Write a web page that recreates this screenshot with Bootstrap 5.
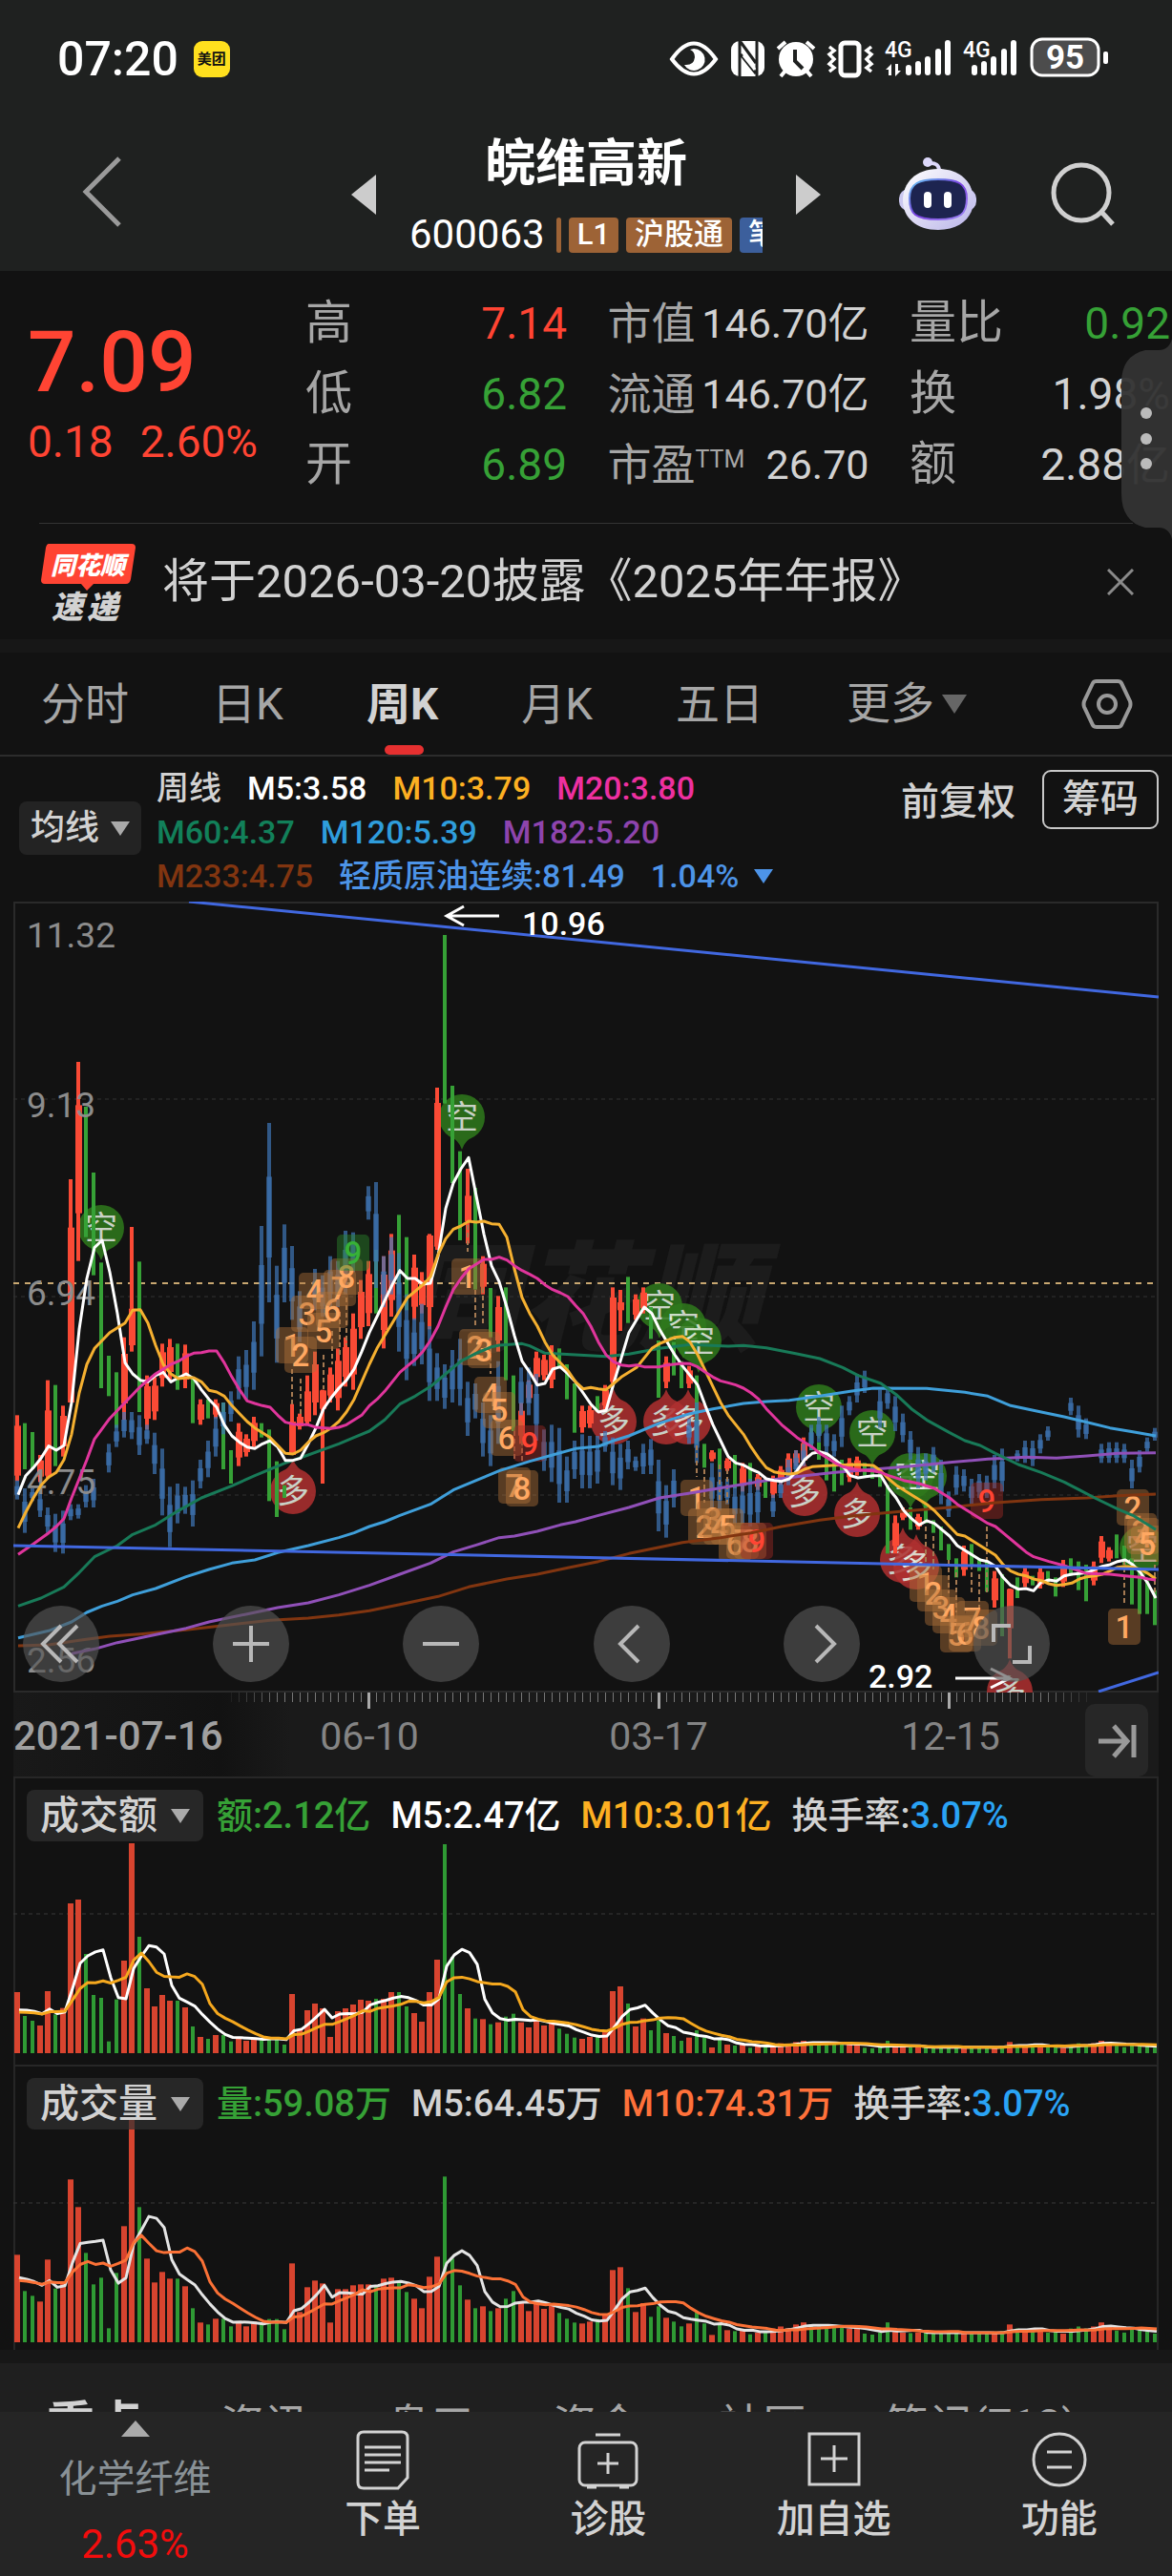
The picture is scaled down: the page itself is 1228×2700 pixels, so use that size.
<!DOCTYPE html>
<html lang="zh-CN">
<head>
<meta charset="utf-8">
<meta name="viewport" content="width=device-width, initial-scale=1">
<title>皖维高新 600063</title>
<link href="https://cdn.jsdelivr.net/npm/bootstrap@5.3.0/dist/css/bootstrap.min.css" rel="stylesheet">
<style>
:root{--up:#ff4433;--down:#36a136;--ink:#d2d2d2;--dim:#a6a6a6}
html,body{height:100%}
body{background:#121212;color:var(--ink);font-family:Roboto,"Noto Sans CJK SC",sans-serif;overflow:hidden}
button{background:none;border:0;padding:0;color:inherit}
svg{display:block}
.txt-up{color:var(--up)}.txt-down{color:var(--down)}
.c-white{color:#fff}.c-gold{color:#fdb022}.c-pink{color:#ee30a0}.c-green{color:#12805a}.c-sky{color:#2f9ddc}.c-violet{color:#8e44ad}.c-brown{color:#813510}.c-blue{color:#4d94e8}.c-orange{color:#ff713a}.c-rate{color:#2aa3f5}
.top-area{background:#1f2120}
.status-bar{height:124px;padding:0 66px 0 60px}
.clock{font-size:50px;font-weight:500;line-height:60px;color:#fff}
.app-chip{width:38px;height:38px;border-radius:9px;background:#ffe01e;color:#111;font-size:15px;font-weight:700;line-height:38px;text-align:center}
.title-bar{height:160px;padding:0 60px}
.side{flex:1 1 0}
.back{margin-left:24px}
.tools{gap:56px}
.title-mid{gap:35px}
.stock-name{font-size:53px;font-weight:700;line-height:60px;color:#fff}
.code-line{width:370px;height:40px;overflow:hidden;white-space:nowrap}
.code-num{font-size:42px;line-height:40px;color:#fff}
.tag{height:37px;line-height:36px;font-size:31px;font-weight:500;color:#fff;background:#9d6336;border-radius:4px;padding:0 9px;flex:none}
.tag-blue{background:#3c5f9c}
.tag-sliver{width:5px;padding:0}
.quote{padding:18px 2px 24px 29px}
.price-col{width:291px}
.price{font-size:89px;line-height:100px;font-weight:500;margin-top:28px}
.chg{font-size:46px;line-height:66px;gap:28px}
.stat{height:74px;font-size:49px;line-height:74px}
.stat dt{font-weight:400;color:var(--dim)}
.stat dd{margin:0;font-size:46px;color:var(--ink)}
.stat dd.txt-up{color:var(--up)}.stat dd.txt-down{color:var(--down)}
.stat sup{font-size:25px;top:-13px}
.col-a{width:274px}.col-b{width:274px}.col-c{width:273px}
.col-b .stat{font-size:46px}.col-b dd{font-size:43px}
.side-handle{position:absolute;right:0;top:340px;z-index:5}
.rule{height:1px;background:#333;margin:0 41px}
.news{height:121px;padding:0 40px 0 43px}
.news-text{font-size:49px;line-height:60px}
.band{height:14px;background:#171717}
.k-tabs{height:109px;padding:0 41px 0 43px;gap:87px;border-bottom:2px solid #2c2c2c}
.k-tabs button{height:107px;font-size:46px;line-height:109px;color:var(--dim)}
.k-tabs .on{font-weight:700;color:var(--ink);position:relative}
.k-tabs .on::after{content:"";position:absolute;left:19px;bottom:0;width:41px;height:10px;border-radius:5px;background:#e63030}
.legend-bar{height:152px;padding:10px 14px 4px 20px}
.pill{background:#232323;border-radius:8px;height:56px;padding:0 14px;font-size:36px;font-weight:500;line-height:56px}
.ma-pill{width:128px;padding:0 12px}
.ma-rows{font-size:34px;font-weight:500;line-height:46px}
.ma-row{gap:27px}
.adj{font-size:40px;font-weight:500;line-height:60px}
.chips{border:2px solid #c8c8c8;border-radius:9px;height:62px;width:122px;font-size:40px;font-weight:500;line-height:58px}
.chart-wrap{margin:0 14px;position:relative}
.chart-wrap>svg{width:100%;height:auto}
.pads{position:absolute;left:0;right:0;bottom:11px;padding:0 114px 0 10px}
.pads button{width:80px;height:80px;border-radius:50%;background:rgba(84,84,84,.65)}
.axis{background:#1a1a1a}
.axis button{position:absolute;right:11px;top:12px;width:66px;height:76px;background:#272727;border-radius:10px}
.vol{border-top:2px solid #272727}
.vol-head{position:absolute;left:14px;top:12px;font-size:38px;font-weight:500;line-height:54px;gap:21px}
.vol-head .pill{width:185px;height:54px;font-size:41px;line-height:54px;background:rgba(48,48,48,.7);margin-right:-7px}
.strip{background:#1f1f1f;flex:1 1 0;min-height:0;overflow:hidden;padding:33px 0 0 49px;gap:82px;font-size:46px;line-height:62px;color:var(--dim);white-space:nowrap}
.strip .on{font-weight:700;font-size:50px;color:var(--ink)}
.dock{background:#252525;height:172px}
.dock button{flex:1 1 0;font-size:40px;font-weight:500;line-height:50px;height:172px}
.dock svg{margin:0 auto 6px}
.dock .sector{flex:0 0 283px;font-weight:400;color:#899196}
.dock .sector svg{margin-bottom:20px}
.sector-up{color:#f20d0d;font-size:42px;margin-top:18px}
text{font-family:Roboto,"Noto Sans CJK SC",sans-serif}
</style>
<script src="https://cdn.jsdelivr.net/npm/bootstrap@5.3.0/dist/js/bootstrap.bundle.min.js"></script>
</head>
<body class="d-flex flex-column position-relative">
<header class="top-area">
  <div class="status-bar d-flex align-items-center justify-content-between">
    <div class="d-flex align-items-center gap-3"><span class="clock">07:20</span><span class="app-chip">美团</span></div>
    <svg width="462" height="46" viewBox="700 39 462 46" fill="none" stroke="#fff" role="img" aria-label="状态">
      <path d="M704 62Q727 29 750 62Q727 93 704 62Z" stroke-width="4"/><path d="M727 51a11.500 11.500 0 1 1-10 17q10 1 11-8q0-6-5-8z" fill="#fff" stroke="none"/>
      <rect x="766" y="43" width="35" height="37" rx="9" fill="#fff" stroke="none"/><path d="M775 43v37M776 44l16 22M776 57l16 20M793 43v37" stroke="#1f2120" stroke-width="3"/><path d="M779 58l12 15" stroke-width="3"/>
      <circle cx="834" cy="62" r="18" fill="#fff" stroke="none"/><path d="M833 52v12l8 8" stroke="#1f2120" stroke-width="4"/><path d="M815 51l8-7M853 51l-8-7M823 74l-5 6M845 74l5 6" stroke-width="4"/>
      <rect x="881" y="45" width="19" height="34" rx="4" stroke-width="5"/><path d="M869 49l5 4-5 4 5 5-5 5 5 4-5 4M913 49l-5 4 5 4-5 5 5 5-5 4 5 4" stroke-width="3.500"/>
      <g fill="#fff" stroke="none"><text x="927" y="60" font-size="23" font-weight="500">4G</text><path d="M934 67v12h-3V73h-3zM938 67h3v7h3l-6 6z"/><rect x="949" y="68" width="6" height="11" rx="3"/><rect x="959" y="64" width="6" height="15" rx="3"/><rect x="969" y="59" width="6" height="20" rx="3"/><rect x="980" y="51" width="6" height="28" rx="3"/><rect x="990" y="42" width="6" height="37" rx="3"/>
      <text x="1009" y="60" font-size="23" font-weight="500">4G</text><rect x="1018" y="68" width="6" height="11" rx="3"/><rect x="1028" y="64" width="6" height="15" rx="3"/><rect x="1038" y="59" width="6" height="20" rx="3"/><rect x="1049" y="51" width="6" height="28" rx="3"/><rect x="1059" y="42" width="6" height="37" rx="3"/>
      <rect x="1156" y="54" width="5" height="13" rx="2"/></g>
      <rect x="1081" y="41" width="70" height="38" rx="11" fill="#4c4c4c" stroke-width="3"/><text x="1116" y="72" font-size="35" font-weight="700" fill="#fff" stroke="none" text-anchor="middle">95</text>
    </svg>
  </div>
  <div class="title-bar d-flex align-items-center">
    <div class="side"><button class="back" aria-label="返回"><svg width="44" height="76" viewBox="0 0 44 76" fill="none" stroke="#9a9a9a" stroke-width="5"><path d="M41 3L6 38l35 35"/></svg></button></div>
    <div class="title-mid d-flex align-items-center">
      <button aria-label="上一只"><svg width="26" height="42" viewBox="0 0 26 42" fill="#ccc"><path d="M26 0v42L0 21z"/></svg></button>
      <div class="text-center">
        <h1 class="stock-name mb-4">皖维高新</h1>
        <div class="code-line d-flex align-items-center gap-2"><span class="code-num">600063</span><span class="tag tag-sliver ms-1"></span><span class="tag">L1</span><span class="tag">沪股通</span><span class="tag tag-blue">笔</span></div>
      </div>
      <button aria-label="下一只"><svg width="26" height="42" viewBox="0 0 26 42" fill="#ccc"><path d="M0 0v42l26-21z"/></svg></button>
    </div>
    <div class="side tools d-flex align-items-center justify-content-end">
      <button aria-label="智能助手"><svg width="110" height="80" viewBox="934 160 110 80">
        <defs><linearGradient id="hd" x1="0" y1="0" x2="1" y2="1"><stop offset="0" stop-color="#fff"/><stop offset="1" stop-color="#b9b4e8"/></linearGradient><linearGradient id="rim" x1="0" y1="0" x2="1" y2="1"><stop offset="0" stop-color="#61c7ef"/><stop offset=".5" stop-color="#7a3fe0"/><stop offset="1" stop-color="#a08cf5"/></linearGradient></defs>
        <circle cx="972" cy="166" r="5" fill="#dcd8fa"/><path d="M973 167q11-1 11 8" stroke="#dcd8fa" stroke-width="4" fill="none"/>
        <rect x="942" y="194" width="81" height="23" rx="10" fill="#cbc8f0"/><path d="M983 173c24 0 37 15 37 33s-14 31-37 31-37-13-37-31 13-33 37-33z" fill="url(#hd)"/>
        <path d="M983 184c20 0 30 4 30 20s-6 22-30 22-30-6-30-22 10-20 30-20z" fill="#1d2450" stroke="url(#rim)" stroke-width="2"/>
        <rect x="968" y="197" width="8" height="17" rx="4" fill="#fff"/><rect x="989" y="197" width="8" height="17" rx="4" fill="#fff"/></svg></button>
      <button aria-label="搜索"><svg width="68" height="70" viewBox="0 0 68 70" fill="none" stroke="#d0d0d0" stroke-width="5"><circle cx="33" cy="33" r="29"/><path d="M54 53l12 13"/></svg></button>
    </div>
  </div>
</header>

<section class="quote d-flex">
  <div class="price-col txt-up">
    <div class="price">7.09</div>
    <div class="chg d-flex"><span>0.18</span><span>2.60%</span></div>
  </div>
  <dl class="col-a mb-0 me-auto">
    <div class="stat d-flex justify-content-between"><dt>高</dt><dd class="txt-up">7.14</dd></div>
    <div class="stat d-flex justify-content-between"><dt>低</dt><dd class="txt-down">6.82</dd></div>
    <div class="stat d-flex justify-content-between"><dt>开</dt><dd class="txt-down">6.89</dd></div>
  </dl>
  <dl class="col-b mb-0 me-auto">
    <div class="stat d-flex justify-content-between"><dt>市值</dt><dd>146.70亿</dd></div>
    <div class="stat d-flex justify-content-between"><dt>流通</dt><dd>146.70亿</dd></div>
    <div class="stat d-flex justify-content-between"><dt>市盈<sup>TTM</sup></dt><dd>26.70</dd></div>
  </dl>
  <dl class="col-c mb-0">
    <div class="stat d-flex justify-content-between"><dt>量比</dt><dd class="txt-down">0.92</dd></div>
    <div class="stat d-flex justify-content-between"><dt>换</dt><dd>1.98%</dd></div>
    <div class="stat d-flex justify-content-between"><dt>额</dt><dd>2.88亿</dd></div>
  </dl>
</section>
<button class="side-handle" aria-label="侧边栏"><svg width="54" height="240" viewBox="1174 340 54 240"><path d="M1228 355q-3 12-14 12h-14q-25 6-25 34v116q0 30 25 36h14q11 0 14 12z" fill="#333" fill-opacity=".96"/><g fill="#bbb"><circle cx="1201" cy="433" r="6"/><circle cx="1201" cy="460" r="6"/><circle cx="1201" cy="486" r="6"/></g></svg></button>
<div class="rule"></div>
<section class="news d-flex align-items-center">
  <svg width="99" height="84" viewBox="42 566 99 84" role="img" aria-label="同花顺速递"><path d="M50 568h87q4 0 4 4l-5 33q-1 5-5 5H97l-7 7-6-7H46q-4 0-4-4l5-34q1-4 3-4z" fill="#ff4433"/><text x="52" y="600" font-size="26" font-weight="900" font-style="italic" fill="#fff">同花顺</text><text x="53" y="646" font-size="33" font-weight="900" font-style="italic" fill="#d2d2d2">速</text><text x="90" y="646" font-size="33" font-weight="900" font-style="italic" fill="#d2d2d2">递</text></svg>
  <span class="news-text ms-4 ps-1">将于2026-03-20披露《2025年年报》</span>
  <button class="ms-auto" aria-label="关闭"><svg width="28" height="28" viewBox="0 0 28 28" stroke="#8a8a8a" stroke-width="3"><path d="M1 1l26 26M27 1L1 27"/></svg></button>
</section>
<div class="band"></div>
<nav class="k-tabs d-flex align-items-center">
  <button>分时</button><button>日K</button><button class="on">周K</button><button>月K</button><button>五日</button>
  <button class="d-flex align-items-center gap-2">更多<svg width="26" height="20" viewBox="0 0 26 20" fill="#666"><path d="M0 0h26L13 20z"/></svg></button>
  <button class="d-flex align-items-center ms-auto" aria-label="设置"><svg width="54" height="54" viewBox="0 0 54 54" fill="none" stroke="#999" stroke-width="4"><path d="M16 3h22q3 0 4 2l9 19q1 3 0 6l-9 19q-1 2-4 2H16q-3 0-4-2L3 30q-1-3 0-6l9-19q1-2 4-2z"/><circle cx="27" cy="27" r="9"/></svg></button>
</nav>
<section class="legend-bar d-flex">
  <button class="pill ma-pill d-flex align-items-center justify-content-between align-self-center mb-2">均线<svg width="20" height="15" viewBox="0 0 20 15" fill="#aaa"><path d="M0 0h20L10 15z"/></svg></button>
  <div class="ma-rows ms-3">
    <div class="ma-row d-flex"><span>周线</span><span class="c-white">M5:3.58</span><span class="c-gold">M10:3.79</span><span class="c-pink">M20:3.80</span></div>
    <div class="ma-row d-flex"><span class="c-green">M60:4.37</span><span class="c-sky">M120:5.39</span><span class="c-violet">M182:5.20</span></div>
    <div class="ma-row c-blue d-flex align-items-center"><span class="c-brown">M233:4.75</span><span>轻质原油连续:81.49</span><span class="d-flex align-items-center gap-3">1.04%<svg width="20" height="15" viewBox="0 0 20 15" fill="#4d94e8"><path d="M0 0h20L10 15z"/></svg></span></div>
  </div>
  <div class="ms-auto d-flex gap-4 align-self-start"><span class="adj me-1 mt-2">前复权</span><button class="chips mt-1">筹码</button></div>
</section>

<main>
  <div class="chart-wrap">
    <svg id="kline" viewBox="14 945 1200 829" role="img" aria-label="周K线"></svg>
    <div class="pads d-flex justify-content-between">
      <button aria-label="最早"><svg viewBox="0 0 80 80" fill="none" stroke="#b8b8b8" stroke-width="4"><path d="M40 21L21 40l19 19M57 21L38 40l19 19"/></svg></button>
      <button aria-label="放大"><svg viewBox="0 0 80 80" stroke="#b8b8b8" stroke-width="4"><path d="M21 40h38M40 21v38"/></svg></button>
      <button aria-label="缩小"><svg viewBox="0 0 80 80" stroke="#b8b8b8" stroke-width="4"><path d="M21 40h38"/></svg></button>
      <button aria-label="左移"><svg viewBox="0 0 80 80" fill="none" stroke="#b8b8b8" stroke-width="4"><path d="M47 21L28 40l19 19"/></svg></button>
      <button aria-label="右移"><svg viewBox="0 0 80 80" fill="none" stroke="#b8b8b8" stroke-width="4"><path d="M34 21l19 19-19 19"/></svg></button>
      <button aria-label="全屏"><svg viewBox="0 0 80 80" fill="none" stroke="#b8b8b8" stroke-width="4"><path d="M21 38V21h18M59 42v17H41"/></svg></button>
    </div>
  </div>
  <div class="chart-wrap axis">
    <svg id="axis" viewBox="14 1774 1200 88" role="img" aria-label="日期轴"></svg>
    <button aria-label="最新"><svg viewBox="0 0 66 76" fill="none" stroke="#999" stroke-width="5"><path d="M14 39h28M30 23l14 16-14 16M51 22v34"/></svg></button>
  </div>
  <div class="chart-wrap vol">
    <svg id="amount" viewBox="14 1864 1200 300" role="img" aria-label="成交额"></svg>
    <div class="vol-head d-flex"><button class="pill d-flex align-items-center justify-content-between">成交额<svg width="20" height="15" viewBox="0 0 20 15" fill="#aaa"><path d="M0 0h20L10 15z"/></svg></button>
      <span class="txt-down">额:2.12亿</span><span class="c-white">M5:2.47亿</span><span class="c-gold">M10:3.01亿</span><span>换手率:<span class="c-rate">3.07%</span></span></div>
  </div>
  <div class="chart-wrap vol">
    <svg id="volume" viewBox="14 2166 1200 297" role="img" aria-label="成交量"></svg>
    <div class="vol-head d-flex"><button class="pill d-flex align-items-center justify-content-between">成交量<svg width="20" height="15" viewBox="0 0 20 15" fill="#aaa"><path d="M0 0h20L10 15z"/></svg></button>
      <span class="txt-down">量:59.08万</span><span>M5:64.45万</span><span class="c-orange">M10:74.31万</span><span>换手率:<span class="c-rate">3.07%</span></span></div>
  </div>
</main>
<div class="band"></div>
<nav class="strip d-flex align-items-baseline"><span class="on">重点</span><span>资讯</span><span>盘口</span><span>资金</span><span>社区</span><span>笔记(713)</span></nav>
<footer class="dock d-flex">
  <button class="sector"><svg width="30" height="17" viewBox="0 0 30 17" fill="#aaa"><path d="M15 0l15 17H0z"/></svg><span class="d-block">化学纤维</span><span class="d-block sector-up">2.63%</span></button>
  <button class="pb-3"><svg width="60" height="64" viewBox="0 0 60 64" fill="none" stroke="#d2d2d2" stroke-width="3"><path d="M10 3h40q6 0 6 6v42l-10 11H10q-6 0-6-6V9q0-6 6-6z"/><path d="M11 19h38M11 27h38M11 35h38M11 43h26"/></svg>下单</button>
  <button class="pb-3"><svg width="64" height="64" viewBox="0 0 64 64" fill="none" stroke="#d2d2d2" stroke-width="3"><rect x="2" y="14" width="60" height="45" rx="6"/><path d="M19 6h26M21 36h22M32 25v22M10 61h10M44 61h10"/></svg>诊股</button>
  <button class="pb-3"><svg width="58" height="64" viewBox="0 0 58 64" fill="none" stroke="#d2d2d2" stroke-width="3"><rect x="3" y="5" width="52" height="53"/><path d="M15 31h28M29 17v28"/></svg>加自选</button>
  <button class="pb-3"><svg width="60" height="64" viewBox="0 0 60 64" fill="none" stroke="#d2d2d2" stroke-width="3"><circle cx="30" cy="32" r="27"/><path d="M17 24h26M17 40h26"/></svg>功能</button>
</footer>

<script>
const UP='#fa4a35', DOWN='#36a136';
const X=i=>18+8*i, Y=v=>1370+v/3;
const n=s=>s.trim().split(/\s+/).map(Number);

// Weekly candles, left to right: high, low, then an optional body top and bottom; levels in thirds of a unit
const candles=`R340 547 373 530|G365 510|G393 510|R465 550|R230 540 325 530|G245 500|R310 470|R-402 300 -250 300|R-771 -145 -635 -295|G-630 -220|G-423 -100|G-140 255|G153 280|G205 380|R95 355|R-252 140 5 120|G-143 330|R215 385|R220 355|R115 250|R100 230|G115 260|R118 255|G220 365|R290 370|G290 350|R290 350|G300 510|G450 555|R365 500|R400 470|R345 440|G365 410|G385 610|G485 660|G560 600|R305 465 360 465|R335 385|R215 370 265 360|R140 340|R260 555 262 320|R190 300|R130 325|R95 250|R20 260|R-85 100|R-145 60|G-180 20|R-160 130|R-230 30|G-290 -40|G-220 10|R-165 40|R-110 20|R-230 70 -225 0|R-690 -180 -642 -190|G-1170 -640|G-696 -390|G-490 -210|R-435 -200 -350 -270|G-375 -55|R-160 -40|G-60 95|R-35 140|G-62 230|G215 390|R300 430|R230 300|R140 240|R150 230|R120 255|G130 190|G180 290|G240 395|R310 395|R310 380|G280 330|R245 325|R-62 240 -30 235|R-54 75 -15 10|G-95 50|R-40 40|R-62 20|G0 100|G105 285|R155 255|G110 215|G170 255|R185 255|G215 430|G430 505|R450 485|G445 510|R475 515|G465 570|R490 580|G490 550|R525 575|G540 600|R530 600|R500 560|R460 540|R450 500|R410 500|G380 450|G425 480|G465 545|G480 580|G480 560|R475 550|R470 530|G490 530|G495 540|G510 565|G560 775|R655 775|R630 670|G630 700|R650 700|G620 680|G670 710|G690 765|G745 795|G790 850|R750 845|G745 810|G790 830|G800 895|R830 945|G840 1035|R885 1105 887 1010|G850 915|R820 880|G845 875|R820 885|G830 865|G850 910|R795 880|G790 845|G800 890|G810 925|R800 875|R720 805|R755 800|G715 790|G750 810|G790 935|G830 965|G860 965|G890 1000`.split('|').map(c=>({up:c[0]=='R',v:n(c.slice(1))}));

// Crude oil overlay: index, high, low
const oil=`0 545 605 1 570 710 2 570 610 3 580 660 4 630 710 5 650 770 6 640 775 7 620 670 8 620 665 9 560 630 10 540 630 12 430 520 13 370 440 14 330 410 15 330 415 16 340 465 17 370 430 18 395 525 19 445 655 20 565 755 21 555 680 22 565 650 23 545 690 24 480 570 25 420 535 26 345 470 27 300 400 28 265 360 29 155 290 30 135 290 31 45 260 32 -255 155 33 -579 -15 34 -130 175 35 -260 -15 36 -192 40 37 -50 110 39 -120 10 40 -100 30 41 -160 0 42 -145 0 43 -240 -40 44 -235 -110 46 -380 -275 47 -393 -60 48 -160 0 49 -220 -40 50 -170 140 51 -40 230 52 35 185 53 -10 180 54 60 295 55 145 295 56 180 320 57 135 300 58 100 310 59 235 405 60 240 350 61 300 470 62 340 500 63 170 430 66 190 340 67 190 340 68 210 420 69 385 515 70 370 550 71 380 615 72 470 615 73 420 540 74 400 570 75 405 570 76 405 555 77 390 455 78 410 560 79 430 575 80 420 510 81 470 515 82 430 525 83 415 525 84 480 705 85 560 725 86 510 630 88 350 430 89 300 490 91 490 640 92 510 640 93 540 620 94 560 680 95 555 680 96 540 690 97 540 680 99 590 660 100 540 600 101 480 560 102 450 530 103 430 500 104 370 450 105 345 425 106 370 460 107 400 470 108 310 440 109 280 340 110 210 300 111 200 270 113 260 380 114 250 320 115 280 390 116 335 425 117 390 480 118 440 570 119 460 545 120 440 520 121 480 620 122 580 660 123 500 590 124 510 580 125 540 620 126 525 600 127 530 600 128 465 570 129 445 580 131 450 485 132 420 490 133 420 500 134 400 460 135 375 420 138 285 340 139 310 410 140 350 415 142 430 490 143 425 490 144 425 490 145 430 490 146 480 570 147 450 520 148 410 455 149 380 420`;

// Moving averages: colour, then index and level pairs
const averages=[
['#813510','0 1065 4 1062 8 1048 12 1035 16 1028 22 1015 28 998 33 985 38 978 42 968 46 955 50 935 55 910 59 880 64 855 68 840 72 820 76 800 80 775 84 755 87 740 92 725 96 710 100 690 105 670 110 655 117 640 122 630 128 615 134 605 140 600 144 593 149 588'],
['#9050b8','7 1090 10 1075 13 1055 17 1035 22 1010 25 990 30 965 34 945 38 930 42 905 46 875 50 840 54 805 57 770 60 748 63 725 65 720 68 705 71 685 73 675 76 655 80 630 84 600 88 585 93 565 98 545 103 530 107 520 112 510 117 500 122 488 127 478 132 472 136 475 140 468 144 460 149 458'],
['#3f9fda','0 1040 4 1018 7 990 9 960 11 940 13 925 15 905 18 885 22 848 25 825 28 805 31 795 34 772 38 750 42 725 44 710 46 690 48 675 50 655 54 620 57 575 60 545 63 515 67 485 70 465 73 445 76 438 78 420 80 405 84 365 88 335 91 320 95 303 98 297 101 293 105 280 109 265 112 255 119 256 124 268 127 280 130 310 134 330 137 345 140 362 143 380 146 392 149 405'],
['#187a58','0 940 3 915 6 880 8 835 10 785 13 750 15 715 18 685 21 640 24 600 28 562 31 530 35 490 38 465 42 430 44 410 46 390 48 355 50 305 52 280 54 250 56 210 58 170 60 145 61 135 62 125 63 120 66 115 67 122 69 145 73 150 77 155 80 148 84 130 88 118 93 123 95 121 98 128 102 147 105 162 108 190 110 215 113 240 115 275 117 320 119 355 122 395 124 420 126 435 128 460 131 495 134 520 137 550 139 575 141 600 144 635 146 655 148 685 149 700'],
['#fff','0 590 1 530 2 505 3 475 4 437 5 450 6 435 7 300 8 70 9 -90 10 -187 11 -210 12 -110 13 20 14 175 15 210 16 230 17 235 18 215 19 205 20 235 21 222 22 210 23 225 24 260 25 290 26 315 27 370 28 405 29 425 30 440 31 445 32 430 33 420 34 440 35 482 36 482 37 475 38 430 39 380 40 320 41 285 42 255 43 230 44 195 45 140 46 80 47 30 48 -20 49 -70 50 -115 51 -90 52 -90 53 -72 54 -75 55 -160 56 -310 57 -390 58 -435 59 -470 60 -350 61 -230 62 -130 63 -80 64 0 65 90 66 170 67 205 68 245 69 240 70 195 71 188 72 210 73 235 74 270 75 305 76 330 77 325 78 240 79 160 80 80 81 40 82 0 83 20 84 70 85 110 86 150 87 185 88 215 89 245 90 310 91 370 92 420 93 470 94 490 95 497 96 510 97 520 98 540 99 545 100 548 101 540 102 515 103 480 104 460 105 455 106 462 107 480 108 500 109 530 110 537 111 533 112 530 113 530 114 570 115 600 116 640 117 665 118 685 119 672 120 680 121 700 122 720 123 750 124 765 125 780 126 795 127 800 128 815 129 850 130 875 131 887 132 885 133 892 134 865 135 858 136 862 137 845 138 840 139 838 140 835 141 825 142 815 143 810 144 800 145 795 146 810 147 835 148 870 149 915'],
['#f5b030','0 695 1 645 2 600 3 560 4 535 5 520 6 480 7 400 8 270 9 180 10 130 11 105 12 80 13 65 14 50 15 10 16 8 17 50 18 120 19 180 20 210 21 225 22 222 23 222 24 235 25 262 26 267 27 280 28 310 29 335 30 360 31 380 32 395 33 410 34 435 35 460 36 462 37 450 38 425 39 405 40 395 41 380 42 360 43 330 44 290 45 235 46 180 47 130 48 90 49 50 50 10 51 -30 52 -50 53 -70 54 -95 55 -165 56 -215 57 -245 58 -255 59 -270 60 -267 61 -270 62 -262 63 -260 64 -220 65 -120 66 -30 67 20 68 60 69 110 70 150 71 175 72 200 73 235 74 257 75 253 76 257 77 260 78 240 79 220 80 205 81 190 82 160 83 130 84 115 85 105 86 95 87 92 88 110 89 150 90 200 91 250 92 300 93 340 94 370 95 400 96 440 97 475 98 505 99 518 100 523 101 525 102 522 103 510 104 502 105 500 107 497 110 495 112 498 113 515 114 540 115 560 116 575 117 590 118 605 119 620 120 640 121 665 122 690 123 715 124 720 125 735 126 750 127 765 128 780 129 810 130 830 131 840 132 845 133 855 134 860 135 870 136 875 137 872 138 868 139 855 140 848 141 845 142 840 143 830 144 818 145 815 146 818 147 825 148 838 149 855'],
['#e0359c','0 778 2 745 4 710 5 690 6 665 7 600 8 540 9 480 10 415 12 350 14 300 15 275 16 250 18 210 20 180 21 170 22 155 23 145 24 143 25 138 26 138 27 175 28 220 29 260 30 295 31 303 32 310 33 315 34 340 35 362 36 368 38 370 39 378 41 382 42 378 43 370 44 355 45 340 46 310 47 290 48 265 49 235 50 205 51 185 52 165 53 140 54 105 55 60 56 0 57 -55 58 -90 59 -120 60 -135 61 -150 62 -150 63 -157 64 -148 65 -130 66 -115 67 -103 68 -90 69 -70 70 -55 71 -45 72 -33 73 -5 74 20 75 60 76 110 77 150 78 172 79 182 80 185 81 182 82 188 84 188 85 182 87 177 88 178 89 188 90 205 91 220 92 232 93 238 94 245 95 255 96 270 97 290 98 320 99 345 100 370 101 390 102 410 103 425 104 440 105 460 106 475 107 490 108 502 110 512 112 515 113 520 114 530 116 545 118 555 120 570 121 585 122 600 123 620 125 650 127 680 128 690 129 710 131 750 132 770 133 785 135 800 137 813 139 830 140 838 143 840 145 845 147 850 148 855 149 858']];

// Signal balloons (x, y of the circle) and numbered flags (label, x, y)
const shortSig=[[106,1287],[484,1171],[691,1369],[716,1390],[732,1405],[858,1475],[914,1502],[954,1547],[968,1547],[1197,1623]];
const longSig=[[307,1563],[643,1490],[698,1490],[721,1490],[843,1565],[898,1587],[946,1635],[960,1642],[1058,1773]];
const flags='1 306 1410 2 315 1420 3 322 1377 4 330 1353 5 339 1395 6 348 1373 7 356 1350 8 363 1338 1 490 1338 2 498 1412 3 507 1415 4 514 1462 5 523 1478 6 531 1507 7 539 1557 8 547 1560 1 730 1570 2 738 1600 3 747 1592 4 754 1600 5 762 1600 6 770 1618 7 778 1615 8 786 1615 1 970 1660 2 978 1670 3 986 1685 4 994 1693 5 1002 1713 6 1011 1712 7 1019 1697 8 1028 1706 1 1178 1705 2 1187 1580 3 1195 1605 4 1198 1610 5 1202 1618';
const nines=[[370,1313,'#2c8a2c','#37b137'],[555,1513,'#a02a26','#ff4433'],[793,1615,'#a02a26','#ff4433'],[1034,1573,'#a02a26','#ff4433']];
const stems='306 1435 1472 315 1445 1482 339 1420 1456 348 1395 1430 356 1375 1420 363 1360 1410 490 1284 1312 498 1352 1390 506 1350 1390 514 1405 1440 539 1500 1532 547 1510 1535 730 1515 1548 738 1540 1575 754 1535 1575 762 1540 1575 970 1600 1640 978 1610 1645 994 1635 1670 1002 1640 1690 1018 1640 1672 1026 1650 1690 1034 1600 1670 1178 1635 1680 1210 1640 1670';

function rect(x,y,w,h,f,o=1){return `<rect x="${x}" y="${y}" width="${w}" height="${Math.max(h,1)}" fill="${f}" fill-opacity="${o}"/>`}
function label(x,y,t,s,f,a='start',w=400){return `<text x="${x}" y="${y}" font-size="${s}" fill="${f}" text-anchor="${a}" font-weight="${w}">${t}</text>`}
function dash(y,c,w,d){return `<path d="M14 ${y}H1214" stroke="${c}" stroke-width="${w}" stroke-dasharray="${d}"/>`}
function path(p,c,w){return `<polyline points="${p}" fill="none" stroke="${c}" stroke-width="${w}" stroke-linejoin="round"/>`}
function balloon(x,y,t,up){
  const c=up?'#b03030':'#2f7a1c',d=up?-1:1;
  return `<g opacity=".85"><path d="M${x-15} ${y+d*18}Q${x-3} ${y+d*24} ${x} ${y+d*34}Q${x+3} ${y+d*24} ${x+15} ${y+d*18}z" fill="${c}"/><circle cx="${x}" cy="${y}" r="24" fill="${c}"/>${label(x,y+12,t,34,'#e9f3e6','middle')}</g>`}
function flag(t,x,y,bg,fg){return `<rect x="${x-17}" y="${y-19}" width="34" height="38" rx="5" fill="${bg}" fill-opacity=".45"/><text x="${x}" y="${y+12}" font-size="33" font-weight="500" fill="${fg}" text-anchor="middle">${t}</text>`}

let s='';
s+=`<text x="418" y="1407" font-size="126" font-weight="900" font-style="italic" fill="#1c1c1c">同花顺</text>`;
s+='<path d="M14 946H1213V1773H15V946" fill="none" stroke="#2a2a2a" stroke-width="2"/>';
s+=dash(1152,'#333',1,'4 4')+dash(1359,'#333',1,'4 4')+dash(1567,'#333',1,'4 4')+dash(1345,'#c9a871',2,'6 6');
shortSig.forEach(p=>s+=balloon(...p,'空',false));
longSig.forEach(p=>s+=balloon(...p,'多',true));
candles.forEach((c,i)=>{
  const [h,l]=c.v,f=c.up?UP:DOWN;let [t,b]=c.v.length>2?c.v.slice(2):[h+(l-h)*.2,l-(l-h)*.2];
  s+=rect(X(i)-2,Y(h),4,(l-h)/3,f);
  if(c.up)s+=rect(X(i)-3,Y(t),7,(b-t)/3,f);
});
const o=n(oil);
for(let k=0;k<o.length;k+=3){const h=o[k+1],l=o[k+2];s+=rect(X(o[k])-2,Y(h),4,(l-h)/3,'#3f76b8',.7)+rect(X(o[k])-3,Y(h+(l-h)*.3),6,(l-h)*.15,'#3f76b8',.6)}
const st=n(stems);
for(let k=0;k<st.length;k+=3)s+=`<path d="M${st[k]} ${st[k+1]}V${st[k+2]}" stroke="#a57a52" stroke-width="2" stroke-dasharray="5 3"/>`;
const fl=n(flags);
for(let k=0;k<fl.length;k+=3)s+=flag(fl[k],fl[k+1],fl[k+2],'#b0713a','#ffa862');
nines.forEach(p=>s+=flag(9,...p));
[[993,'11.32'],[1171,'9.13'],[1368,'6.94'],[1566,'4.75'],[1753,'2.56']].forEach(([y,t])=>s+=label(28,y,t,37,'#8c8c8c'));
averages.forEach(([c,d])=>{const v=n(d),p=[];for(let k=0;k<v.length;k+=2)p.push(X(v[k])+1+','+Y(v[k+1]));s+=path(p.join(' '),c,3)});
s+=path('198,945 1214,1045','#4168e0',3)+path('14,1620 1214,1645','#4168e0',3)+path('1151,1773 1214,1753','#4168e0',3);
s+='<path d="M523 960H468M486 950L468 960L486 970M1001 1759H1058M1038 1749L1058 1759L1038 1769" fill="none" stroke="#fff" stroke-width="3"/>';
s+=label(547,980,'10.96',34,'#fff','start',500)+label(910,1769,'2.92',34,'#fff','start',500);
document.getElementById('kline').innerHTML=s;

// Date axis: a tick a week, a tall one every few months
s='<defs><linearGradient id="fade"><stop offset="0" stop-color="#191919"/><stop offset=".75" stop-color="#121212"/><stop offset="1" stop-color="#1a1a1a"/></linearGradient></defs><rect x="14" y="1774" width="290" height="88" fill="url(#fade)"/>';
for(let x=242;x<=1140;x+=8)s+=rect(x,1774,1,10,'#777',Math.min(1,(x-234)/60,(1150-x)/60));
[386,690,994].forEach(x=>s+=rect(x-1,1774,3,17,'#aaa'));
s+=label(14,1834,'2021-07-16',42,'#a0a0a0','start',500)+label(387,1834,'06-10',41,'#848484','middle')+label(690,1834,'03-17',41,'#848484','middle')+label(996,1834,'12-15',41,'#848484','middle');
document.getElementById('axis').innerHTML=s;

// Turnover panels: bar height, in thirds, measured down from the common ceiling
const tail=`885 880 876 880 872 868 872 876 880 878 874 880 880 890 892 888 868 886 888 889 888 888 888 888 888 888 890 888 888 888 889 885 872 880 888 880 884 888 886 890 880 876 880 876 868 876 884 888 880 882 886 890`;
const amt=n(`715 790 805 820 712 785 765 436 424 595 724 733 870 738 616 247 541 703 760 724 742 742 763 823 856 862 850 850 870 860 868 858 860 862 860 880 721 835 772 751 766 856 775 766 754 739 742 736 736 715 715 760 781 808 715 613 250 604 721 766 798 800 816 810 792 783 810 826 800 820 810 830 846 858 862 856 850 840 712 697 751 823 798 835 805 844 853 868 858 835 858 889 865 880 883 880 890 886 `+tail).map(v=>907-v);
const vol=n(`610 724 739 757 625 716 700 373 460 604 703 682 841 667 520 178 460 622 697 664 685 685 709 778 823 829 811 811 835 820 835 820 825 812 812 844 637 790 712 691 700 823 718 718 706 703 703 706 685 682 694 727 748 778 679 616 364 622 706 751 778 772 787 778 748 724 760 787 756 780 762 793 811 823 826 820 812 800 658 649 715 790 762 805 772 808 820 835 826 790 826 862 830 847 850 847 860 855 `).map(v=>885-v).concat(n(tail).map(v=>(907-v)*1.6));
function panel(id,top,base,grid,data,seed,c5,c10){
  let s=`<path d="M15 ${top}V${base+12}M1213 ${top}V${base+12}" stroke="#262626" stroke-width="2"/>`+dash(grid,'#383838',1,'4 4');
  data.slice(0,150).forEach((v,i)=>{const up=candles[i].up;s+=up?rect(X(i)-3,base-v/3,6,v/3,'#d8442f'):rect(X(i)-2,base-v/3,4,v/3,'#2f9a34')});
  const all=Array(10).fill(seed).concat(data.slice(0,150));
  for(const [k,c] of [[5,c5],[10,c10]]){const p=[];for(let i=0;i<150;i++){const w=all.slice(i+11-k,i+11);p.push(X(i)+2+','+(base-w.reduce((a,b)=>a+b)/k/3).toFixed(1))}s+=path(p.join(' '),c,3)}
  document.getElementById(id).innerHTML=s;
}
panel('amount',1864,2152,2006,amt,122,'#fff','#f5a81e');
panel('volume',2166,2455,2309,vol,185,'#e4e4e4','#fb7136');
</script>
</body>
</html>
